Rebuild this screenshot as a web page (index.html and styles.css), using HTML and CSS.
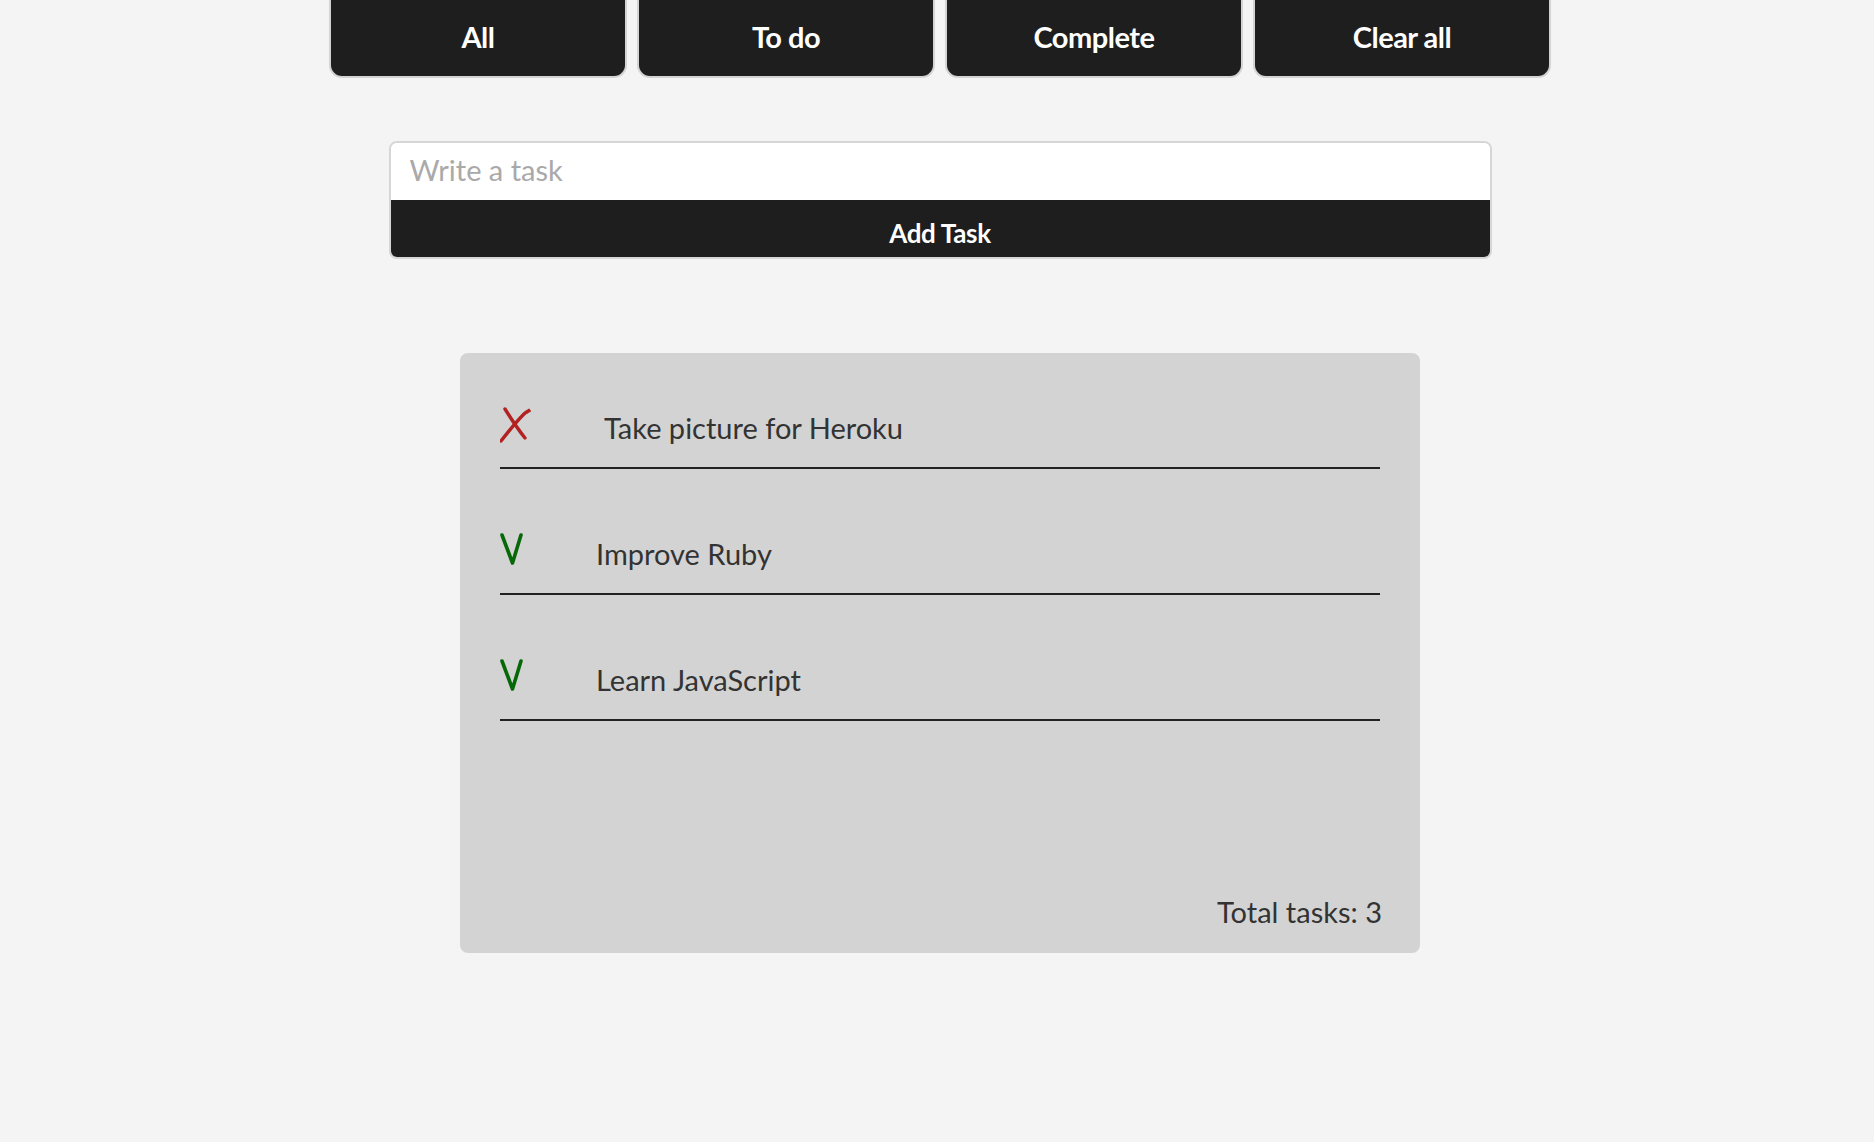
FILE: index.html
```html
<!DOCTYPE html>
<html lang="en">
<head>
<meta charset="utf-8">
<title>Todo</title>
<link rel="stylesheet" href="styles.css">
</head>
<body>
  <nav class="filters">
    <button class="filter-btn">All</button>
    <button class="filter-btn">To do</button>
    <button class="filter-btn">Complete</button>
    <button class="filter-btn">Clear all</button>
  </nav>

  <form class="task-form">
    <input class="task-input" type="text" placeholder="Write a task">
    <button class="add-btn" type="button">Add Task</button>
  </form>

  <section class="panel">
    <ul class="task-list">
      <li class="task">
        <svg class="icon icon-x" width="31" height="38" viewBox="0 0 31 38">
          <path d="M1 34 C 8 25, 16 15, 24 7 C 26 5, 28 4, 30 3 C 29 4, 28 4, 27 5" fill="none" stroke="#b22222" stroke-width="3.4" stroke-linecap="round"/>
          <path d="M5 2 C 10 10, 17 21, 25 31" fill="none" stroke="#b22222" stroke-width="3.4" stroke-linecap="round"/>
        </svg>
        <span class="task-text">Take picture for Heroku</span>
      </li>
      <li class="task">
        <svg class="icon icon-v" width="23" height="38" viewBox="0 0 23 38">
          <path d="M2 2 L 12.5 30 L 21 2" fill="none" stroke="#066806" stroke-width="3.6" stroke-linecap="round" stroke-linejoin="round"/>
        </svg>
        <span class="task-text">Improve Ruby</span>
      </li>
      <li class="task">
        <svg class="icon icon-v" width="23" height="38" viewBox="0 0 23 38">
          <path d="M2 2 L 12.5 30 L 21 2" fill="none" stroke="#066806" stroke-width="3.6" stroke-linecap="round" stroke-linejoin="round"/>
        </svg>
        <span class="task-text">Learn JavaScript</span>
      </li>
    </ul>
    <footer class="panel-footer">Total tasks: 3</footer>
  </section>
</body>
</html>
```

FILE: styles.css
```css
* {
  box-sizing: border-box;
}

body {
  margin: 0;
  padding-left: 6px;
  background: #f4f4f4;
  font-family: Lato, "Noto Sans", sans-serif;
  color: #333;
}

.filters {
  display: flex;
  justify-content: center;
  gap: 10px;
  margin-top: -3px;
}

.filter-btn {
  width: 298px;
  height: 81px;
  background: #1e1e1e;
  color: #fff;
  border: 2px solid #d3d3d3;
  border-top: none;
  border-radius: 0 0 13px 13px;
  font-family: Lato, "Noto Sans", sans-serif;
  font-weight: 700;
  font-size: 29px;
  letter-spacing: -0.5px;
  padding: 0 0 1px;
}

.task-form {
  width: 1103px;
  margin: 63px auto 0;
  border: 2px solid #d6d6d6;
  border-radius: 8px;
  overflow: hidden;
  display: flex;
  flex-direction: column;
  background: #fff;
}

.task-input {
  height: 57px;
  border: none;
  outline: none;
  background: #fff;
  padding: 0 19px 4px;
  font-family: Lato, "Noto Sans", sans-serif;
  font-size: 29px;
  color: #333;
}

.task-input::placeholder {
  color: #a9a9a9;
}

.add-btn {
  height: 57px;
  border: none;
  background: #1e1e1e;
  color: #fff;
  font-family: Lato, "Noto Sans", sans-serif;
  font-weight: 700;
  font-size: 26px;
  letter-spacing: -0.3px;
  padding: 8px 0 0;
}

.panel {
  width: 960px;
  height: 600px;
  margin: 94px auto 0;
  background: #d3d3d3;
  border-radius: 8px;
  padding: 30px 40px 24px;
  display: flex;
  flex-direction: column;
}

.task-list {
  list-style: none;
  margin: 0;
  padding: 0;
  display: flex;
  flex-direction: column;
  gap: 40px;
}

.task {
  height: 86px;
  display: flex;
  align-items: flex-end;
  padding-bottom: 22px;
  border-bottom: 2px solid #222;
}

.icon {
  flex: none;
  margin-right: 73px;
}

.task-text {
  font-size: 29px;
  line-height: 35px;
  color: #333;
}

.panel-footer {
  margin-top: auto;
  text-align: right;
  font-size: 29px;
  line-height: 35px;
  color: #333;
  margin-right: -2px;
}
```
